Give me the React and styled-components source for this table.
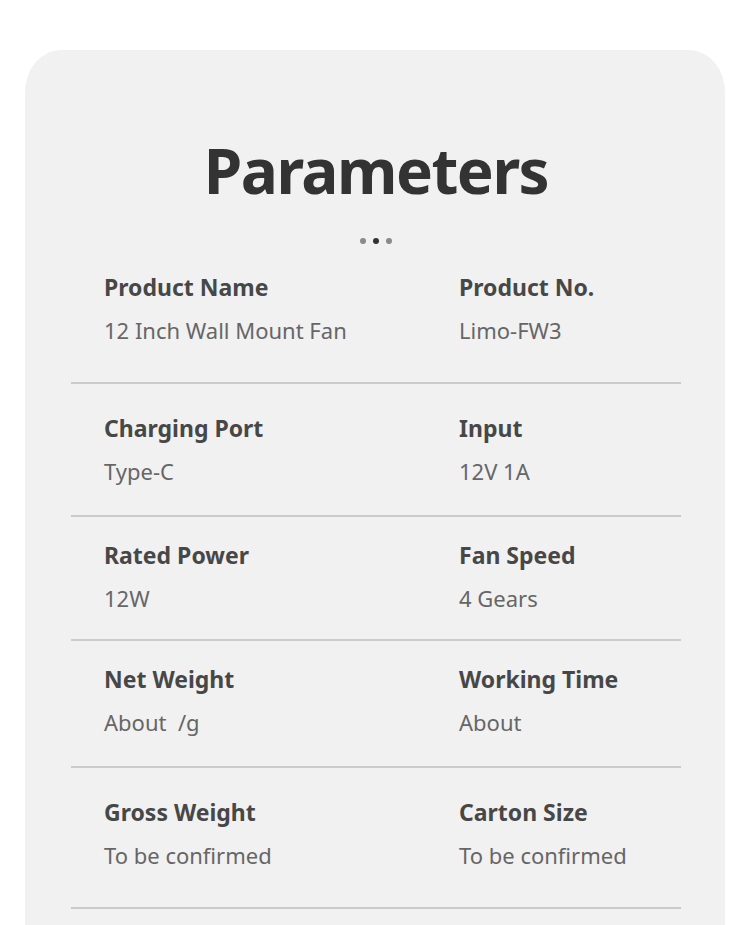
import React from "react";
import styled, { createGlobalStyle } from "styled-components";

const GlobalStyle = createGlobalStyle`
    html, body {
        margin: 0;
        padding: 0;
        background: #ffffff;
        font-family: "Noto Sans", "Open Sans", sans-serif;
    }
`;

const Page = styled.div`
    width: 750px;
    height: 925px;
    overflow: hidden;
    padding-top: 50px;
    box-sizing: border-box;
`;

const Card = styled.div`
    margin: 0 25px;
    background: #f1f1f1;
    border-radius: 36px 36px 0 0 / 42px 42px 0 0;
    padding: 0 44px 80px 46px;
    min-height: 900px;
`;

const Title = styled.h1`
    margin: 0;
    padding-top: 80px;
    text-align: center;
    font-size: 62px;
    line-height: 80px;
    font-weight: 700;
    letter-spacing: -1.5px;
    color: #333333;
`;

const Dots = styled.div`
    display: flex;
    justify-content: center;
    gap: 7px;
    margin-top: 28px;
    height: 6px;
    align-items: center;
`;

const Dot = styled.span`
    width: 6px;
    height: 6px;
    border-radius: 50%;
    background: ${(p) => (p.$dark ? "#333333" : "#8a8a8a")};
`;

const Table = styled.div`
    margin-top: 28px;
`;

const Row = styled.div`
    display: grid;
    grid-template-columns: 355px 1fr;
    padding: ${(p) => p.$pt}px 0 ${(p) => p.$pb}px 33px;
    border-bottom: 2px solid #cbcbcb;
`;

const Cell = styled.div`
    display: flex;
    flex-direction: column;
    gap: 13px;
`;

const Label = styled.div`
    font-size: 23px;
    line-height: 30px;
    font-weight: 700;
    color: #474747;
`;

const Value = styled.div`
    font-size: 22px;
    line-height: 30px;
    font-weight: 400;
    color: #666666;
    white-space: pre;
`;

const rows = [
    { pt: 0, pb: 37, items: [["Product Name", "12 Inch Wall Mount Fan"], ["Product No.", "Limo-FW3"]] },
    { pt: 29, pb: 29, items: [["Charging Port", "Type-C"], ["Input", "12V 1A"]] },
    { pt: 23, pb: 26, items: [["Rated Power", "12W"], ["Fan Speed", "4 Gears"]] },
    { pt: 23, pb: 29, items: [["Net Weight", "About  /g"], ["Working Time", "About"]] },
    { pt: 29, pb: 37, items: [["Gross Weight", "To be confirmed"], ["Carton Size", "To be confirmed"]] },
];

const App = () => {
    return (
        <Page>
            <GlobalStyle />
            <Card>
                <Title>Parameters</Title>
                <Dots>
                    <Dot />
                    <Dot $dark />
                    <Dot />
                </Dots>
                <Table>
                    {rows.map((row, i) => (
                        <Row key={i} $pt={row.pt} $pb={row.pb}>
                            {row.items.map(([label, value]) => (
                                <Cell key={label}>
                                    <Label>{label}</Label>
                                    <Value>{value}</Value>
                                </Cell>
                            ))}
                        </Row>
                    ))}
                </Table>
            </Card>
        </Page>
    );
};

export default App;
